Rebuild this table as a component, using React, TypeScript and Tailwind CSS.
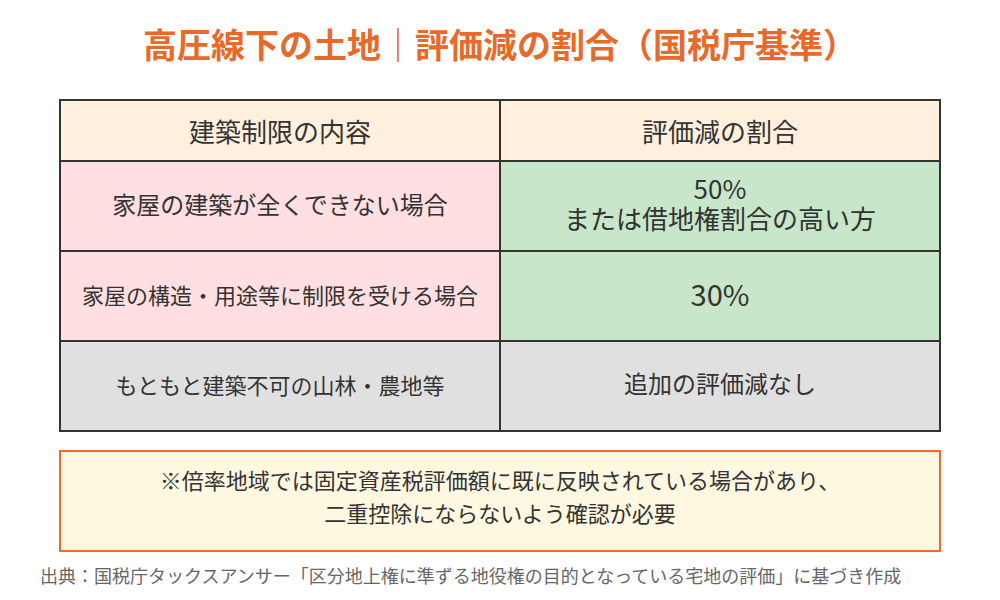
import React from 'react';

const font = { fontFamily: '"Noto Sans CJK JP", "Noto Sans", sans-serif' };

const rows = [
  {
    left: '家屋の建築が全くできない場合',
    right: ['50%', 'または借地権割合の高い方'],
    leftBg: 'bg-[#ffdfe1]',
    rightBg: 'bg-[#c8e6c9]',
    leftSize: 'text-[24px]',
    rightSize: 'text-[26px]',
  },
  {
    left: '家屋の構造・用途等に制限を受ける場合',
    right: ['30%'],
    leftBg: 'bg-[#ffdfe1]',
    rightBg: 'bg-[#c8e6c9]',
    leftSize: 'text-[22px]',
    rightSize: 'text-[29px]',
  },
  {
    left: 'もともと建築不可の山林・農地等',
    right: ['追加の評価減なし'],
    leftBg: 'bg-[#e0e0e0]',
    rightBg: 'bg-[#e0e0e0]',
    leftSize: 'text-[22px]',
    rightSize: 'text-[24px]',
  },
];

export default function App() {
  return (
    <div className="w-[1000px] h-[600px] bg-white text-[#333]" style={font}>
      <div className="h-[86px] flex items-center justify-center">
        <h1 className="text-[34px] font-bold text-[#e86a2b]">
          高圧線下の土地｜評価減の割合（国税庁基準）
        </h1>
      </div>

      <div className="px-[59px] mt-[13px]">
        <table className="w-full border-collapse border-2 border-[#333] table-fixed">
          <thead>
            <tr className="h-[61px] bg-[#fff0dd]">
              <th className="border-2 border-[#333] font-normal text-[26px]">建築制限の内容</th>
              <th className="border-2 border-[#333] font-normal text-[26px]">評価減の割合</th>
            </tr>
          </thead>
          <tbody>
            {rows.map((r, i) => (
              <tr key={i} className="h-[90px]">
                <td className={`border-2 border-[#333] text-center pb-[4px] ${r.leftBg} ${r.leftSize}`}>{r.left}</td>
                <td className={`border-2 border-[#333] text-center leading-[30px] pb-[6px] ${r.rightBg} ${r.rightSize}`}>
                  {r.right.map((t, j) => (
                    <div key={j}>{t}</div>
                  ))}
                </td>
              </tr>
            ))}
          </tbody>
        </table>

        <div className="mt-[18px] h-[102px] pb-[10px] border-2 border-[#ee6b2b] bg-[#fff8e1] flex flex-col items-center justify-center text-[22px] leading-[33px]">
          <p>※倍率地域では固定資産税評価額に既に反映されている場合があり、</p>
          <p>二重控除にならないよう確認が必要</p>
        </div>
      </div>

      <p className="mt-[10px] pl-[40px] text-[18px] text-[#666]">
        出典：国税庁タックスアンサー「区分地上権に準ずる地役権の目的となっている宅地の評価」に基づき作成
      </p>
    </div>
  );
}
